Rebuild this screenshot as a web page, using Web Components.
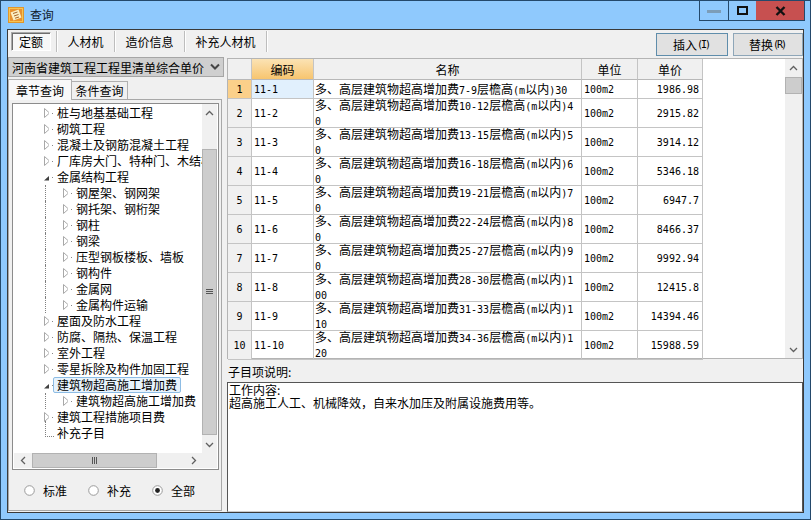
<!DOCTYPE html>
<html lang="zh">
<head>
<meta charset="utf-8">
<title>查询</title>
<style>
  html, body { margin: 0; padding: 0; background: #8fc9fd; }
  body { width: 811px; height: 520px; overflow: hidden; font: 12px "Noto Sans CJK SC", sans-serif; color: #000; }
</style>
</head>
<body>
<qd-window>
  <qd-titlebar slot="title" caption="查询"></qd-titlebar>
  <qd-toolbar slot="toolbar"></qd-toolbar>
  <qd-sidebar slot="left"></qd-sidebar>
  <qd-grid slot="right"></qd-grid>
  <qd-note slot="right"></qd-note>
</qd-window>

<script>
const FONT = `font-family: "Noto Sans CJK SC", sans-serif; font-size: 12px;`;
const ASCII = `.a { font-family: "DejaVu Sans Mono", "Liberation Mono", monospace; font-size: 10px; }`;

// half width runs get their own span, the original face has 6px latin in a 12px cjk font
const mix = s => s.replace(/[\x21-\x7e]+/g, m => `<span class="a">${m}</span>`);

class QdWindow extends HTMLElement {
  connectedCallback() {
    const root = this.attachShadow({ mode: 'open' });
    root.innerHTML = `
<style>
  :host { display: flex; flex-direction: column; box-sizing: border-box; width: 811px; height: 520px; background: #8fc9fd; border: 1px solid #24496b; }
  .client { box-sizing: border-box; display: flex; flex-direction: column; width: 797px; height: 484px; margin-left: 6px; background: #f0f0f0; border: 1px solid #3a3a3a; }
  .body { display: flex; flex: 1 1 auto; min-height: 0; }
  .left { display: flex; width: 217px; }
  .right { display: flex; flex-direction: column; width: 576px; margin-left: 2px; }
</style>
<slot name="title"></slot>
<div class="client">
  <slot name="toolbar"></slot>
  <div class="body">
    <div class="left"><slot name="left"></slot></div>
    <div class="right"><slot name="right"></slot></div>
  </div>
</div>`;
  }
}

class QdTitlebar extends HTMLElement {
  connectedCallback() {
    const root = this.attachShadow({ mode: 'open' });
    root.innerHTML = `
<style>
  :host { display: flex; align-items: flex-start; height: 28px; flex: none; ${FONT} color: #10202c; }
  .icon { width: 16px; height: 16px; margin: 6px 0 0 7px; }
  .caption { margin: 6px 0 0 6px; line-height: 16px; letter-spacing: -0.2px; }
  .ctl { display: flex; margin-left: auto; margin-right: 5px; height: 20px; border: 1px solid #24496b; border-top: 0; box-sizing: border-box; }
  .ctl div { display: flex; align-items: center; justify-content: center; height: 100%; }
  .min { width: 28px; }
  .max { width: 27px; border-left: 1px solid #24496b; }
  .close { width: 48px; background: #c75050; }
</style>
<svg class="icon" viewBox="0 0 16 16">
  <rect x="0.5" y="0.5" width="15" height="15" fill="#f6c453" stroke="#e0962c"/>
  <rect x="2" y="2" width="12" height="12" fill="#e8912f"/>
  <path d="M2.5 5.5L10.5 2.5 13.5 10.5 5.5 13.5z" fill="#fbeec4"/>
  <path d="M5 6.5L9.5 5M6 9L10.5 7.5M7 11.2L11 10" fill="none" stroke="#a8652a" stroke-width="1"/>
</svg>
<span class="caption">${this.getAttribute('caption')}</span>
<div class="ctl">
  <div class="min"><svg width="14" height="4"><rect y="1" width="14" height="3" fill="#7c9db8"/></svg></div>
  <div class="max"><svg width="11" height="9"><rect x="1" y="1" width="9" height="7" fill="none" stroke="#111" stroke-width="2"/></svg></div>
  <div class="close"><svg width="11" height="10"><path d="M1.5 1l8 8M9.5 1l-8 8" stroke="#111" stroke-width="2.4"/></svg></div>
</div>`;
  }
}

class QdToolbar extends HTMLElement {
  connectedCallback() {
    const root = this.attachShadow({ mode: 'open' });
    root.innerHTML = `
<style>
  :host { display: flex; flex: none; height: 27px; align-items: flex-start; ${FONT} }
  ${ASCII}
  .tab { display: flex; align-items: center; justify-content: center; height: 19px; margin-top: 2px; }
  .on { box-sizing: border-box; width: 40px; margin-left: 3px; background: #f7f7f7; border: 1px solid #a9a9a9; border-right-color: #fff; border-bottom-color: #fff; box-shadow: inset 1px 1px 0 #6e6e6e; }
  .sep { width: 1px; height: 21px; margin-top: 1px; background: #bdbdbd; box-shadow: 1px 0 0 #fff; }
  .spacer { flex: 1 1 auto; }
  .btn { box-sizing: border-box; display: flex; align-items: center; justify-content: center; height: 23px; margin-top: 3px; background: #e1e1e1; border: 1px solid #5f8dab; }
  .btn .a { font-size: 10px; letter-spacing: -2px; padding-right: 2px; }
</style>
<div class="tab on">定额</div>
<div style="width:5px"></div><div class="sep"></div>
<div class="tab" style="width:57px">人材机</div><div class="sep"></div>
<div class="tab" style="width:69px">造价信息</div><div class="sep"></div>
<div class="tab" style="width:81px">补充人材机</div><div class="sep"></div>
<div class="spacer"></div>
<div class="btn" style="width:72px">插入<span class="a">(I)</span></div>
<div style="width:5px"></div>
<div class="btn" style="width:70px;border-color:#8ea6b8">替换<span class="a">(R)</span></div>`;
  }
}

class QdScrollbar extends HTMLElement {
  connectedCallback() {
    const root = this.attachShadow({ mode: 'open' });
    const h = this.getAttribute('orient') === 'h';
    const size = +this.getAttribute('size');
    const before = +this.getAttribute('before');
    const thumb = +this.getAttribute('thumb');
    const grip = this.hasAttribute('grip');
    const chev = (d) => `<svg width="9" height="9" viewBox="0 0 9 9"><path d="${d}" fill="none" stroke="#606060" stroke-width="1.3"/></svg>`;
    const a = h ? chev('M6 1L2.5 4.5 6 8') : chev('M1 6L4.5 2.5 8 6');
    const b = h ? chev('M3 1L6.5 4.5 3 8') : chev('M1 3L4.5 6.5 8 3');
    const lines = h
      ? `<svg width="8" height="7"><path d="M1.5 0v7M3.5 0v7M5.5 0v7" stroke="#555"/></svg>`
      : `<svg width="7" height="8"><path d="M0 1.5h7M0 3.5h7M0 5.5h7" stroke="#555"/></svg>`;
    root.innerHTML = `
<style>
  :host { display: flex; flex: none; flex-direction: ${h ? 'row' : 'column'}; ${h ? 'width' : 'height'}: ${size}px; ${h ? 'height' : 'width'}: ${this.getAttribute('cross') || 15}px; background: #f0f0f0; }
  .b { flex: none; display: flex; align-items: center; justify-content: center; ${h ? 'width' : 'height'}: 18px; }
  .gap { flex: none; ${h ? 'width' : 'height'}: ${before}px; }
  .fill { flex: 1 1 auto; }
  .t { box-sizing: border-box; flex: none; ${h ? 'width' : 'height'}: ${thumb}px; background: #cdcdcd; border: 1px solid #b2b2b2; display: flex; align-items: center; justify-content: center; }
</style>
<div class="b">${a}</div>
<div class="gap"></div>
<div class="t">${grip ? lines : ''}</div>
<div class="fill"></div>
<div class="b">${b}</div>`;
  }
}

class QdTree extends HTMLElement {
  connectedCallback() {
    const root = this.attachShadow({ mode: 'open' });
    const items = [
      [1, 'c', '桩与地基基础工程'], [1, 'c', '砌筑工程'], [1, 'c', '混凝土及钢筋混凝土工程'], [1, 'c', '厂库房大门、特种门、木结构工程'],
      [1, 'o', '金属结构工程'],
      [2, 'c', '钢屋架、钢网架'], [2, 'c', '钢托架、钢桁架'], [2, 'c', '钢柱'], [2, 'c', '钢梁'], [2, 'c', '压型钢板楼板、墙板'], [2, 'c', '钢构件'], [2, 'c', '金属网'], [2, 'c', '金属构件运输'],
      [1, 'c', '屋面及防水工程'], [1, 'c', '防腐、隔热、保温工程'], [1, 'c', '室外工程'], [1, 'c', '零星拆除及构件加固工程'],
      [1, 'o', '建筑物超高施工增加费', 'sel'],
      [2, 'c', '建筑物超高施工增加费'],
      [1, 'c', '建筑工程措施项目费'], [1, 'l', '补充子目'],
    ];
    const arrow = {
      c: `<svg class="ar" width="6" height="10"><path d="M.5 .5L5.5 5 .5 9.5z" fill="#fff" stroke="#a8a8a8"/></svg><i class="dot"></i>`,
      o: `<svg class="ar" width="6" height="10"><path d="M0 8.5h6V3z" fill="#404040"/></svg><i class="dot"></i>`,
      l: `<i class="leaf"></i>`,
    };
    const rows = items.map(([lvl, kind, text, sel]) => `
      <div class="row l${lvl}">${lvl === 2 ? '<i class="guide"></i>' : ''}<span class="arrow">${arrow[kind]}</span><span class="label ${sel || ''}">${text}</span></div>`).join('');
    root.innerHTML = `
<style>
  :host { display: block; flex: 1 1 auto; min-width: 0; height: 349px; overflow: hidden; background: #fff; padding-top: 1px; box-sizing: border-box; ${FONT} }
  .row { display: flex; align-items: stretch; height: 16px; line-height: 16px; white-space: nowrap; }
  .l1 { padding-left: 26px; }
  .l2 { padding-left: 31px; }
  .arrow { flex: none; display: flex; align-items: center; width: 9px; height: 16px; }
  .l1 .arrow { padding-left: 4px; }
  .dot { flex: none; width: 1px; height: 1px; margin-left: 3px; background: #888; }
  .guide { flex: none; width: 18px; box-sizing: border-box; border-left: 1px dotted #808080; }
  .leaf { box-sizing: border-box; flex: none; width: 9px; height: 16px; margin-left: 1px; margin-top: -8px; border-left: 1px dotted #808080; border-bottom: 1px dotted #808080; }
  .label { box-sizing: border-box; padding: 0 4px; }
  .sel { background: #e8f3fc; border: 1px solid #8dbce4; border-radius: 2px; padding: 0 3px; line-height: 14px; }
</style>
${rows}`;
  }
}

class QdRadio extends HTMLElement {
  connectedCallback() {
    const root = this.attachShadow({ mode: 'open' });
    const on = this.hasAttribute('checked');
    root.innerHTML = `
<style>
  :host { display: inline-flex; align-items: center; gap: 8px; ${FONT} }
  svg { display: block; }
</style>
<svg width="11" height="11"><circle cx="5.5" cy="5.5" r="4.8" fill="#fff" stroke="#9a9a9a"/>${on ? '<circle cx="5.5" cy="5.5" r="2.4" fill="#222"/>' : ''}</svg>
<slot></slot>`;
  }
}

class QdSidebar extends HTMLElement {
  connectedCallback() {
    const root = this.attachShadow({ mode: 'open' });
    root.innerHTML = `
<style>
  :host { display: flex; flex-direction: column; width: 217px; ${FONT} }
  .combo { box-sizing: border-box; display: flex; align-items: center; justify-content: space-between; width: 216px; height: 20px; padding: 0 3px 0 3px; background: #cfcfcf; border: 1px solid #a6a6a6; white-space: nowrap; }
  .tabs { display: flex; align-items: flex-end; height: 20px; margin-top: 2px; }
  .t1 { box-sizing: border-box; display: flex; align-items: center; justify-content: center; width: 64px; height: 21px; margin-bottom: -1px; background: #f8f8f8; border: 1px solid #b0b0b0; border-bottom: 0; position: relative; z-index: 1; }
  .t2 { box-sizing: border-box; display: flex; align-items: center; justify-content: center; width: 56px; height: 18px; background: #f0f0f0; border: 1px solid #b0b0b0; border-left: 0; border-bottom: 0; }
  .page { box-sizing: border-box; display: flex; flex-direction: column; width: 214px; height: 412px; padding: 3px 0 0 3px; background: #f0f0f0; border: 1px solid #a8a8a8; }
  .frame { box-sizing: border-box; flex: none; width: 207px; height: 367px; background: #fff; border: 1px solid #8c8c8c; padding: 0 1px; }
  .top { display: flex; }
  .bottom { display: flex; }
  .corner { flex: none; width: 15px; height: 15px; background: #f0f0f0; }
  .radios { flex: 1 1 auto; display: flex; align-items: center; gap: 21px; padding: 0 0 0 12px; }
</style>
<div class="combo"><span>河南省建筑工程工程里清单综合单价</span><svg width="10" height="8"><path d="M1 1.5L5 5.5 9 1.5" fill="none" stroke="#444" stroke-width="2"/></svg></div>
<div class="tabs"><div class="t1">章节查询</div><div class="t2">条件查询</div></div>
<div class="page">
  <div class="frame">
    <div class="top"><qd-tree></qd-tree><qd-scrollbar orient="v" size="349" before="27" thumb="286" grip></qd-scrollbar></div>
    <div class="bottom"><qd-scrollbar orient="h" size="188" before="0" thumb="125" grip></qd-scrollbar><div class="corner"></div></div>
  </div>
  <div class="radios"><qd-radio>标准</qd-radio><qd-radio>补充</qd-radio><qd-radio checked>全部</qd-radio></div>
</div>`;
  }
}

class QdGrid extends HTMLElement {
  connectedCallback() {
    const root = this.attachShadow({ mode: 'open' });
    const rows = [
      ['11-1', ['多、高层建筑物超高增加费7-9层檐高(m以内)30'], '1986.98'],
      ['11-2', ['多、高层建筑物超高增加费10-12层檐高(m以内)4', '0'], '2915.82'],
      ['11-3', ['多、高层建筑物超高增加费13-15层檐高(m以内)5', '0'], '3914.12'],
      ['11-4', ['多、高层建筑物超高增加费16-18层檐高(m以内)6', '0'], '5346.18'],
      ['11-5', ['多、高层建筑物超高增加费19-21层檐高(m以内)7', '0'], '6947.7'],
      ['11-6', ['多、高层建筑物超高增加费22-24层檐高(m以内)8', '0'], '8466.37'],
      ['11-7', ['多、高层建筑物超高增加费25-27层檐高(m以内)9', '0'], '9992.94'],
      ['11-8', ['多、高层建筑物超高增加费28-30层檐高(m以内)1', '00'], '12415.8'],
      ['11-9', ['多、高层建筑物超高增加费31-33层檐高(m以内)1', '10'], '14394.46'],
      ['11-10', ['多、高层建筑物超高增加费34-36层檐高(m以内)1', '20'], '15988.59'],
    ];
    const body = rows.map(([code, name, price], i) => `
      <div class="row ${i === 0 ? 'first' : ''}">
        <div class="c num">${i + 1}</div>
        <div class="c code a">${code}</div>
        <div class="c name">${name.map(l => `<div>${mix(l)}</div>`).join('')}</div>
        <div class="c unit a">100m2</div>
        <div class="c price a">${price}</div>
      </div>`).join('');
    root.innerHTML = `
<style>
  :host { box-sizing: border-box; display: flex; flex: none; width: 576px; height: 301px; margin-top: 1px; background: #fff; border: 1px solid #b4b4b4; ${FONT} }
  ${ASCII}
  .table { flex: 1 1 auto; display: flex; flex-direction: column; }
  .row { display: flex; height: 29px; flex: none; }
  .first { height: 19px; }
  .head { height: 21px; }
  .c { box-sizing: border-box; display: flex; align-items: center; border-right: 1px solid #c4c4c4; border-bottom: 1px solid #c4c4c4; }
  .num { width: 24px; justify-content: center; background: #f0f0f0; font-family: "DejaVu Sans Mono", monospace; font-size: 10px; }
  .code { width: 62px; padding-left: 2px; }
  .name { width: 268px; padding-left: 1px; flex-direction: column; align-items: flex-start; justify-content: center; line-height: 13px; white-space: nowrap; }
  .unit { width: 56px; padding-left: 2px; }
  .price { width: 65px; justify-content: flex-end; padding-right: 3px; }
  .head .c { justify-content: center; background: #f0f0f0; padding: 0; border-bottom-color: #b8b8b8; }
  .head .hot { background: linear-gradient(#fbe3b4, #f7c56f); }
  .first .num { background: #fbd08a; }
  .first .code { background: #e1f0fd; }
  .bar { flex: none; margin-left: auto; }
</style>
<div class="table">
  <div class="row head">
    <div class="c" style="width:24px"></div>
    <div class="c hot" style="width:62px">编码</div>
    <div class="c" style="width:268px">名称</div>
    <div class="c" style="width:56px">单位</div>
    <div class="c" style="width:65px">单价</div>
  </div>
  ${body}
</div>
<qd-scrollbar class="bar" orient="v" size="299" before="0" thumb="17" cross="17"></qd-scrollbar>`;
  }
}

class QdNote extends HTMLElement {
  connectedCallback() {
    const root = this.attachShadow({ mode: 'open' });
    root.innerHTML = `
<style>
  :host { display: flex; flex-direction: column; flex: 1 1 auto; min-height: 0; ${FONT} }
  .cap { flex: none; height: 23px; line-height: 26px; padding-left: 1px; }
  .box { box-sizing: border-box; flex: 1 1 auto; background: #fff; border: 1px solid #555; border-bottom-color: #ccc; padding: 0 1px; line-height: 13px; }
</style>
<div class="cap">子目项说明:</div>
<div class="box">工作内容:<br>超高施工人工、机械降效，自来水加压及附属设施费用等。</div>`;
  }
}

customElements.define('qd-window', QdWindow);
customElements.define('qd-titlebar', QdTitlebar);
customElements.define('qd-toolbar', QdToolbar);
customElements.define('qd-scrollbar', QdScrollbar);
customElements.define('qd-tree', QdTree);
customElements.define('qd-radio', QdRadio);
customElements.define('qd-sidebar', QdSidebar);
customElements.define('qd-grid', QdGrid);
customElements.define('qd-note', QdNote);
</script>
</body>
</html>
